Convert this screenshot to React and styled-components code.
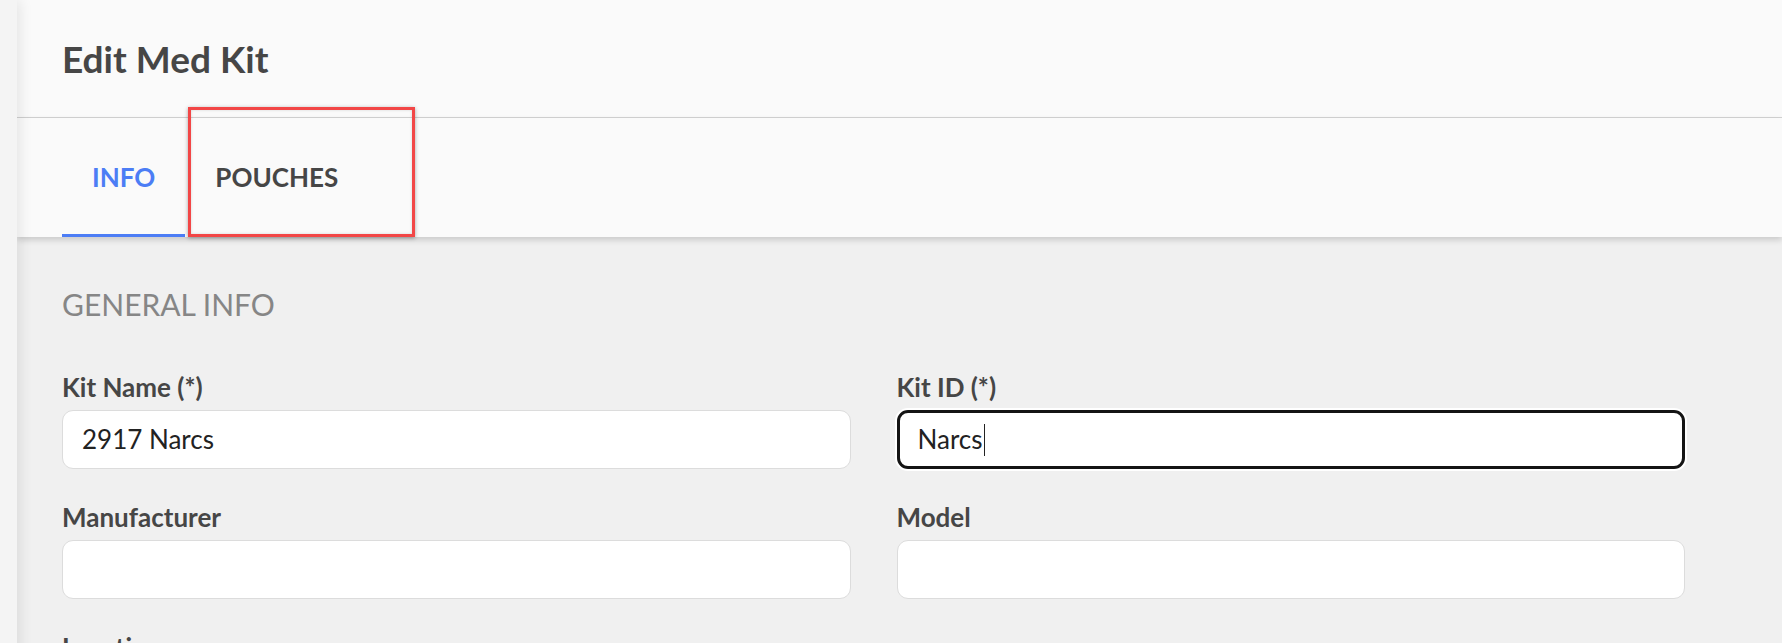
import React from "react";
import styled, { createGlobalStyle } from "styled-components";

const GlobalStyle = createGlobalStyle`
  html, body {
    margin: 0;
    padding: 0;
    height: 100%;
    overflow: hidden;
    background: #f0f0f0;
    font-family: Lato, "Open Sans", "Liberation Sans", sans-serif;
  }
`;

const Page = styled.div`
  position: relative;
  display: flex;
  min-height: 643px;
`;

const Sidebar = styled.div`
  position: relative;
  z-index: 3;
  flex: 0 0 17px;
  background: #f4f4f4;
  box-shadow: 3px 0 14px rgba(0, 0, 0, 0.09);
`;

const Main = styled.div`
  flex: 1;
  display: flex;
  flex-direction: column;
  background: #f0f0f0;
`;

const Header = styled.header`
  background: #fafafa;
  padding: 37px 45px 0;
  height: 118px;
  box-sizing: border-box;
  border-bottom: 1px solid #d3d3d3;

  > h1 {
    margin: 0;
    font-size: 37px;
    line-height: 1.2;
    font-weight: 700;
    color: #464646;
  }
`;

const TabBar = styled.nav`
  position: relative;
  z-index: 2;
  display: flex;
  height: 119px;
  padding: 0 45px;
  background: #fafafa;
  box-shadow: 0 3px 6px rgba(0, 0, 0, 0.16);
`;

const Tab = styled.div`
  display: flex;
  align-items: center;
  padding: 3px 30px 0;
  font-size: 26px;
  font-weight: 700;
  line-height: 1.2;
  color: ${props => (props.$active ? "#4c7df5" : "#464646")};
  border-bottom: 3px solid ${props => (props.$active ? "#4c7df5" : "transparent")};
  cursor: pointer;
`;

const Highlight = styled.div`
  position: absolute;
  left: 188px;
  top: 107px;
  width: 227px;
  height: 130px;
  box-sizing: border-box;
  border: 3px solid #f24646;
  box-shadow: 0 1px 4px rgba(0, 0, 0, 0.35), inset 0 0 3px rgba(0, 0, 0, 0.15);
  pointer-events: none;
  z-index: 5;
`;

const Content = styled.section`
  padding: 49px 97px 0 45px;
`;

const SectionTitle = styled.h2`
  margin: 0 0 50px;
  font-size: 30px;
  line-height: 1.2;
  font-weight: 400;
  color: #868686;
`;

const FormGrid = styled.div`
  display: grid;
  grid-template-columns: 1fr 1fr;
  column-gap: 46px;
  row-gap: 33px;
`;

const Field = styled.div`
  display: flex;
  flex-direction: column;
  gap: 7px;

  > label {
    font-size: 26px;
    line-height: 1.2;
    font-weight: 700;
    color: #464646;
  }
`;

const InputBox = styled.div`
  display: flex;
  align-items: center;
  height: 59px;
  box-sizing: border-box;
  padding: 0 ${props => (props.$focused ? "18px" : "19px")};
  background: #fff;
  border: ${props => (props.$focused ? "3px solid #141414" : "1px solid #dcdcdc")};
  border-radius: 11px;
  box-shadow: ${props => (props.$focused ? "0 0 0 2px #ffffff" : "none")};
  font-size: 26px;
  line-height: 1.2;
  color: #222;
`;

const Caret = styled.span`
  display: inline-block;
  width: 1px;
  height: 32px;
  margin-left: 1px;
  background: #222;
`;

const fields = [
  { label: "Kit Name (*)", value: "2917 Narcs" },
  { label: "Kit ID (*)", value: "Narcs", focused: true },
  { label: "Manufacturer", value: "" },
  { label: "Model", value: "" },
  { label: "Location", value: "" }
];

export default function App() {
  return (
    <>
      <GlobalStyle />
      <Page>
        <Sidebar />
        <Main>
          <Header>
            <h1>Edit Med Kit</h1>
          </Header>
          <TabBar>
            <Tab $active>INFO</Tab>
            <Tab>POUCHES</Tab>
          </TabBar>
          <Content>
            <SectionTitle>GENERAL INFO</SectionTitle>
            <FormGrid>
              {fields.map((f, idx) => (
                <Field key={idx}>
                  <label>{f.label}</label>
                  <InputBox $focused={f.focused}>
                    {f.value}
                    {f.focused && <Caret />}
                  </InputBox>
                </Field>
              ))}
            </FormGrid>
          </Content>
        </Main>
        <Highlight />
      </Page>
    </>
  );
}
